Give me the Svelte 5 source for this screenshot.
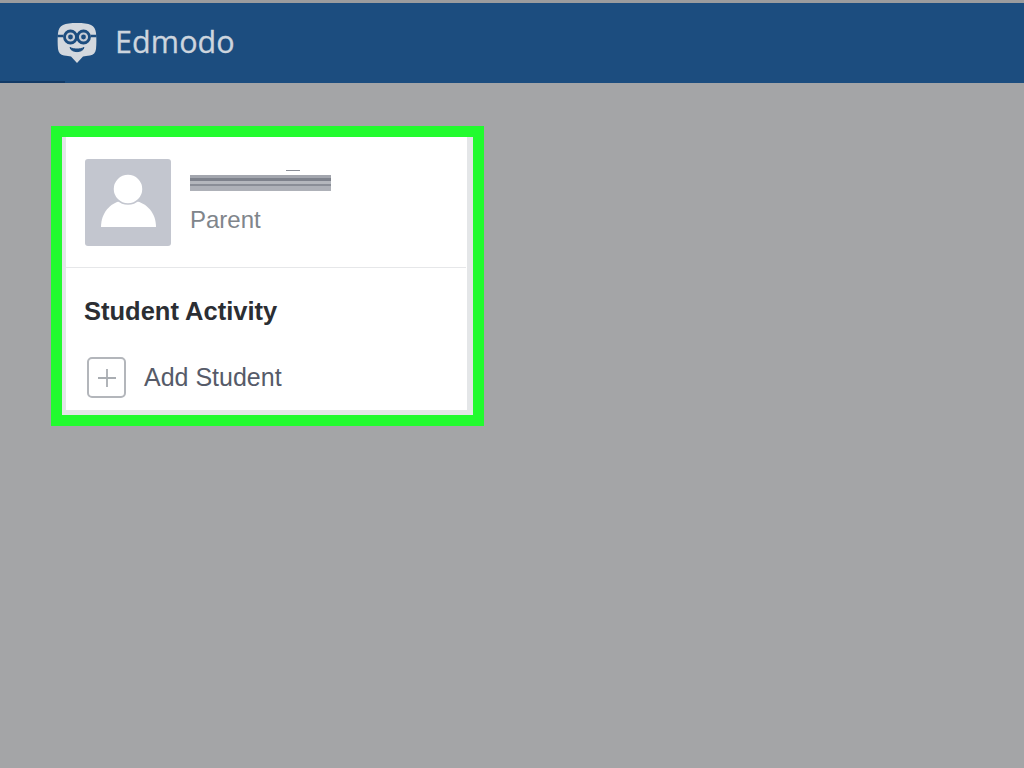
<script>
  let role = 'Parent';
  let heading = 'Student Activity';
  let addLabel = 'Add Student';
</script>

<div class="page">
  <header class="topbar">
    <svg class="logo" viewBox="0 0 40 42" width="40" height="42" aria-hidden="true">
      <path d="M20 1c6 0 11 .5 14 2 3 1.500 4.500 4 5 8 .5 5 .5 11 0 16-.5 3.500-2.500 6-6 6.500-3 .5-5 .5-7 1l-6 6.500-6-6.500c-2-.5-4-.5-7-1-3.500-.5-5.500-3-6-6.500-.5-5-.5-11 0-16 .5-4 2-6.500 5-8 3-1.500 8-2 14-2z" fill="#d3d8de"/>
      <path d="M.5 14h6M33.500 14h6M17.500 13h5" stroke="#1c4d7f" stroke-width="2.600" fill="none"/>
      <circle cx="13.500" cy="15" r="6" fill="#c5ccd5" stroke="#1c4d7f" stroke-width="2.800"/>
      <circle cx="26.500" cy="15" r="6" fill="#c5ccd5" stroke="#1c4d7f" stroke-width="2.800"/>
      <circle cx="13.500" cy="15" r="2.400" fill="#1c4d7f"/>
      <circle cx="26.500" cy="15" r="2.400" fill="#1c4d7f"/>
      <path d="M13 25.500c4 2 10 2 14 0-1 5.500-13 5.500-14 0z" fill="#1c4d7f" stroke="#1c4d7f" stroke-width="1" stroke-linejoin="round"/>
    </svg>
    <span class="brand">Edmodo</span>
  </header>

  <main class="content">
    <section class="highlight">
      <div class="card">
        <div class="profile">
          <div class="avatar">
            <svg viewBox="0 0 86 87" width="86" height="87" aria-hidden="true">
              <path d="M16 68c0-14 9-24 20-26h14c12 2 21 12 21 26z" fill="#fff"/>
              <circle cx="43" cy="30" r="15" fill="#fff" stroke="#c3c6cf" stroke-width="1.500"/>
            </svg>
          </div>
          <div class="who">
            <div class="redacted"></div>
            <div class="role">{role}</div>
          </div>
        </div>
        <div class="activity">
          <h2>{heading}</h2>
          <div class="add-row">
            <span class="plus">
              <svg viewBox="0 0 20 20" width="20" height="20" aria-hidden="true">
                <path d="M10 1v18M1 10h18" stroke="#a9adb2" stroke-width="1.800" fill="none"/>
              </svg>
            </span>
            <span class="add-label">{addLabel}</span>
          </div>
        </div>
      </div>
    </section>
  </main>
</div>

<style>
  :global(body) {
    margin: 0;
    background: #a4a5a7;
  }

  .page {
    height: 768px;
    overflow: hidden;
    background: #a4a5a7;
    font-family: "Liberation Sans", Arial, sans-serif;
  }

  .topbar {
    box-sizing: border-box;
    height: 83px;
    border-top: 3px solid #9b9c9e;
    background: linear-gradient(#123a66, #123a66) 0 100% / 65px 2px no-repeat, #1c4d7f;
    display: flex;
    align-items: center;
    padding: 0 0 2px 57px;
    gap: 18px;
  }

  .logo {
    flex: none;
    margin-top: 2px;
  }

  .brand {
    margin-bottom: 2px;
    font-family: "Open Sans", "Liberation Sans", sans-serif;
    font-size: 30.500px;
    letter-spacing: 0.100px;
    color: #cdd5de;
    -webkit-text-stroke: 0.300px #cdd5de;
  }

  .content {
    padding: 43px 0 0 51px;
  }

  .highlight {
    box-sizing: border-box;
    width: 433px;
    height: 300px;
    border: 11px solid #22fb2f;
    background: #e4e6e8;
    padding: 0 6px 5px 4px;
  }

  .card {
    height: 100%;
    background: #fff;
    display: flex;
    flex-direction: column;
  }

  .profile {
    box-sizing: border-box;
    height: 131px;
    flex: none;
    margin-right: 1px;
    padding: 22px 0 0 19px;
    border-bottom: 1px solid #e6e7e9;
    display: flex;
    gap: 19px;
  }

  .avatar {
    width: 86px;
    height: 87px;
    background: #c3c6cf;
    border-radius: 3px;
  }

  .avatar svg {
    display: block;
  }

  .who {
    padding-top: 16px;
  }

  .redacted {
    position: relative;
    width: 141px;
    height: 16px;
    background: linear-gradient(
      #a3a6ae 0 3px,
      #7e828c 3px 6px,
      #b4b7bd 6px 9px,
      #8a8e97 9px 11px,
      #aeb1b8 11px 16px
    );
  }

  .redacted::after {
    content: "";
    position: absolute;
    left: 96px;
    top: -5px;
    width: 14px;
    height: 1px;
    background: #8a8e97;
  }

  .role {
    margin-top: 16px;
    font-size: 24px;
    line-height: 26px;
    color: #80858b;
  }

  .activity {
    padding: 27px 0 0 18px;
  }

  h2 {
    margin: 0;
    font-size: 25.500px;
    line-height: 32px;
    font-weight: 700;
    color: #2b2e33;
  }

  .add-row {
    margin-top: 30px;
    padding-left: 3px;
    display: flex;
    align-items: center;
    gap: 18px;
  }

  .plus {
    box-sizing: border-box;
    width: 39px;
    height: 41px;
    border: 2px solid #b3b6bb;
    border-radius: 5px;
    display: flex;
    align-items: center;
    justify-content: center;
  }

  .add-label {
    font-size: 25px;
    color: #565b69;
  }
</style>
